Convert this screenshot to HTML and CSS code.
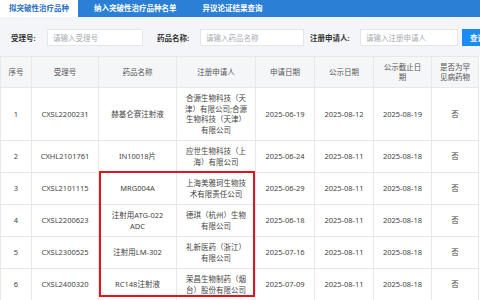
FILE: index.html
```html
<!DOCTYPE html>
<html lang="zh-CN">
<head>
<meta charset="utf-8">
<link rel="stylesheet" href="styles.css">
</head>
<body>
<div class="tabs">
  <div class="tab active">拟突破性治疗品种</div>
  <div class="tab second">纳入突破性治疗品种名单</div>
  <div class="tab">异议论证结果查询</div>
</div>
<div class="search">
  <span class="lbl l1">受理号:</span><input class="inp i1" placeholder="请输入受理号">
  <span class="lbl l2">药品名称:</span><input class="inp i2" placeholder="请输入药品名称">
  <span class="lbl l3">注册申请人:</span><input class="inp i3" placeholder="请输入注册申请人">
  <button class="btn">查询</button>
</div>
<div class="tablewrap">
  <table class="grid">
    <colgroup>
      <col class="c1"><col class="c2"><col class="c3"><col class="c4"><col class="c5"><col class="c6"><col class="c7"><col class="c8">
    </colgroup>
    <thead>
      <tr><th>序号</th><th>受理号</th><th>药品名称</th><th>注册申请人</th><th>申请日期</th><th>公示日期</th><th class="wrap">公示截止日期</th><th class="wrap">是否为罕见病药物</th></tr>
    </thead>
    <tbody>
      <tr><td>1</td><td>CXSL2200231</td><td>赫基仑赛注射液</td><td>合源生物科技（天津）有限公司;合源生物科技（天津）有限公司</td><td>2025-06-19</td><td>2025-08-12</td><td>2025-08-19</td><td>否</td></tr>
      <tr><td>2</td><td>CXHL2101761</td><td>IN10018片</td><td>应世生物科技（上海）有限公司</td><td>2025-06-24</td><td>2025-08-11</td><td>2025-08-18</td><td>否</td></tr>
      <tr><td>3</td><td>CXSL2101115</td><td>MRG004A</td><td>上海美雅珂生物技术有限责任公司</td><td>2025-06-29</td><td>2025-08-11</td><td>2025-08-18</td><td>否</td></tr>
      <tr><td>4</td><td>CXSL2200623</td><td>注射用ATG-022 ADC</td><td>德琪（杭州）生物有限公司</td><td>2025-06-18</td><td>2025-08-11</td><td>2025-08-18</td><td>否</td></tr>
      <tr><td>5</td><td>CXSL2300525</td><td>注射用LM-302</td><td>礼新医药（浙江）有限公司</td><td>2025-07-16</td><td>2025-08-11</td><td>2025-08-18</td><td>否</td></tr>
      <tr><td>6</td><td>CXSL2400320</td><td>RC148注射液</td><td>荣昌生物制药（烟台）股份有限公司</td><td>2025-07-09</td><td>2025-08-11</td><td>2025-08-18</td><td>否</td></tr>
    </tbody>
  </table>
  <div class="highlight"></div>
</div>
</body>
</html>
```

FILE: styles.css
```css
* { box-sizing: border-box; }
html, body { margin: 0; padding: 0; background: #fff; }
body {
  font-family: "Noto Sans", "Noto Sans CJK SC", sans-serif;
  font-size: 7.5px;
  color: #444;
  width: 480px;
  height: 300px;
  overflow: hidden;
}
.tabs {
  display: flex;
  height: 17px;
  background: #2b7fd4;
}
.tab {
  line-height: 17px;
  padding: 0 13px;
  color: #fff;
  font-weight: bold;
  white-space: nowrap;
  flex-shrink: 0;
}
.tab.active {
  background: #fff;
  color: #2a6fc4;
  padding: 0 9px;
}
.tab.second { margin-left: 3px; }
.search {
  display: flex;
  align-items: center;
  background: #f3f5f8;
  padding: 12px 0 10px 11px;
  height: 39px;
}
.search > * { flex-shrink: 0; }
.lbl {
  font-weight: bold;
  color: #333;
  white-space: nowrap;
  font-size: 7.5px;
}
.inp {
  height: 17px;
  border: 1px solid #e3e6eb;
  background: #fff;
  font-family: inherit;
  font-size: 7.5px;
  padding: 0 5px;
  color: #333;
  outline: none;
}
.inp::placeholder { color: #a8abb2; }
.l1 { width: 36px; }
.i1 { width: 96px; margin-right: 14px; }
.l2 { width: 43px; }
.i2 { width: 104px; margin-right: 6px; }
.l3 { width: 50px; }
.i3 { width: 98px; margin-right: 4px; }
.btn {
  height: 17px;
  width: 40px;
  border: 0;
  background: #1c8cf2;
  color: #fff;
  font-family: inherit;
  font-size: 7.5px;
  font-weight: bold;
  text-align: left;
  padding: 0 0 0 8px;
}
.tablewrap {
  position: relative;
}
.grid {
  table-layout: fixed;
  border-collapse: collapse;
  width: 478px;
}
.c1 { width: 31px; }
.c2 { width: 67px; }
.c3 { width: 78px; }
.c4 { width: 79px; }
.c5 { width: 59px; }
.c6 { width: 59px; }
.c7 { width: 58px; }
.c8 { width: 47px; }
.grid th, .grid td {
  border: 1px solid #e6e8eb;
  text-align: center;
  vertical-align: middle;
  line-height: 10.5px;
}
.grid th {
  background: #f5f6f8;
  color: #555;
  font-weight: normal;
  height: 31px;
  padding: 0 3px;
}
.grid th.wrap { padding: 0 8px; }
.grid td {
  padding: 5px 7px;
  color: #444;
}
.highlight {
  position: absolute;
  left: 99px;
  top: 115px;
  width: 156px;
  height: 126px;
  border: 2px solid #e3141b;
}
```
